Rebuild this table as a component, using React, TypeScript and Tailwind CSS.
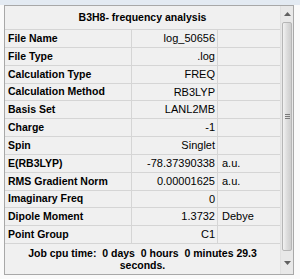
import React from 'react';

interface IRow {
  label: string;
  value: string;
  unit?: string;
  short?: boolean;
}

const rows: IRow[] = [
  { label: 'File Name', value: 'log_50656' },
  { label: 'File Type', value: '.log' },
  { label: 'Calculation Type', value: 'FREQ' },
  { label: 'Calculation Method', value: 'RB3LYP', short: true },
  { label: 'Basis Set', value: 'LANL2MB' },
  { label: 'Charge', value: '-1' },
  { label: 'Spin', value: 'Singlet' },
  { label: 'E(RB3LYP)', value: '-78.37390338', unit: 'a.u.' },
  { label: 'RMS Gradient Norm', value: '0.00001625', unit: 'a.u.' },
  { label: 'Imaginary Freq', value: '0', short: true },
  { label: 'Dipole Moment', value: '1.3732', unit: 'Debye' },
  { label: 'Point Group', value: 'C1' },
];

const ScrollBar: React.FC = () => {
  return (
    <div className="w-[13px] flex flex-col bg-[#e8e8e8] border-l border-[#e0e0e0]">
      <div className="h-[16px] flex items-center justify-center">
        <svg width="7" height="4" viewBox="0 0 7 4">
          <path d="M3.5 0 L7 4 L0 4 Z" fill="#606060" />
        </svg>
      </div>
      <div className="h-[229px] mx-[1px] rounded-[2px] border border-[#b5b5b5] bg-gradient-to-r from-[#f2f2f2] via-[#dcdcdc] to-[#cdcdcd] flex items-center justify-center">
        <div className="flex flex-col gap-[1px] mt-[-40px]">
          <div className="w-[5px] h-[1px] bg-[#7a7a7a]" />
          <div className="w-[5px] h-[1px] bg-[#7a7a7a]" />
          <div className="w-[5px] h-[1px] bg-[#7a7a7a]" />
        </div>
      </div>
      <div className="flex-1 flex items-center justify-center">
        <svg width="7" height="4" viewBox="0 0 7 4">
          <path d="M0 0 L7 0 L3.5 4 Z" fill="#606060" />
        </svg>
      </div>
    </div>
  );
};

const App: React.FC = () => {
  return (
    <div
      className="w-[300px] h-[279px] bg-[#fafafa] flex flex-col text-[11px] text-black"
      style={{ fontFamily: 'Tahoma, "Liberation Sans", Arial, sans-serif' }}
    >
      <div className="h-[5px] bg-[#e3eaf2]" />
      <div className="ml-[4px] w-[290px] h-[270px] border border-[#a8a8a8] bg-[#f0f0f0] flex">
        <div className="flex-1 flex flex-col">
          <div className="h-[23px] flex items-center justify-center font-bold text-[10.5px]">
            B3H8- frequency analysis
          </div>
          {rows.map((row) => (
            <div
              key={row.label}
              className={`${
                row.short ? 'h-[17px]' : 'h-[18px]'
              } grid grid-cols-[127px_86px_1fr] border-t border-[#d5d5d5]`}
            >
              <div className="pl-[3px] font-bold text-[10.5px] flex items-center border-r border-[#d5d5d5]">
                {row.label}
              </div>
              <div className="pr-[2px] flex items-center justify-end border-r border-[#d5d5d5]">
                {row.value}
              </div>
              <div className="pl-[4px] flex items-center">{row.unit}</div>
            </div>
          ))}
          <div className="flex-1 border-t border-[#d5d5d5] flex items-center justify-center text-center font-bold text-[10.5px] leading-[12px] pb-[1px]">
            <div>
              Job cpu time:&nbsp; 0 days&nbsp; 0 hours&nbsp; 0 minutes 29.3
              <br />
              seconds.
            </div>
          </div>
        </div>
        <ScrollBar />
      </div>
    </div>
  );
};

export default App;
